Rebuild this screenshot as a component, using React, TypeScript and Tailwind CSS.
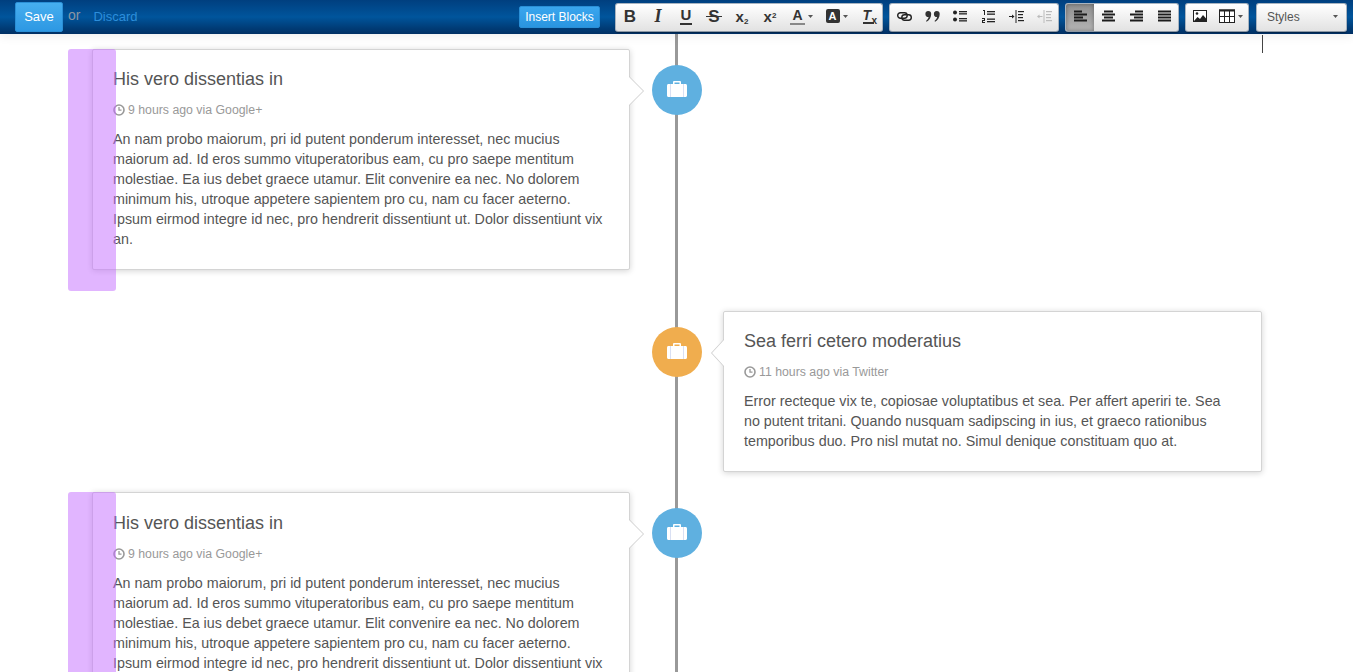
import React from 'react';

const Caret = () => (
  <svg width="5" height="3" viewBox="0 0 5 3" className="ml-[3px] fill-[#555]">
    <path d="M0 0h5L2.5 3z" />
  </svg>
);

const ToolButton = ({ children, width = 'w-[28px]', active }: { children: React.ReactNode; width?: string; active?: boolean }) => (
  <div
    className={`flex h-full items-center justify-center pb-[2px] ${width} ${
      active ? 'bg-gradient-to-b from-[#8f8f8f] to-[#b5b5b5] shadow-[inset_0_0_4px_rgba(0,0,0,0.35)]' : ''
    }`}
  >
    {children}
  </div>
);

const ToolGroup = ({ children }: { children: React.ReactNode }) => (
  <div className="flex h-[29px] overflow-hidden rounded-[3px] border border-[#a9b4c0] border-b-[#8d98a5] bg-gradient-to-b from-white to-[#e2e2e2] shadow-[0_1px_1px_rgba(0,0,0,0.3)]">
    {children}
  </div>
);

const Glyph = ({ children, className }: { children: React.ReactNode; className?: string }) => (
  <span className={`font-bold leading-none text-[#333] ${className ?? ''}`}>{children}</span>
);

const Lines = ({ rows }: { rows: [number, number][] }) => (
  <svg width="13" height="12" viewBox="0 0 13 12" className="fill-[#1c1c1c]">
    {rows.map(([x, w], i) => (
      <rect key={i} x={x} y={i * 3 + 0.5} width={w} height="2" />
    ))}
  </svg>
);

const Toolbar = () => (
  <div className="ml-[15px] flex items-center gap-[6px]">
    <ToolGroup>
      <ToolButton><Glyph className="text-[17px]">B</Glyph></ToolButton>
      <ToolButton><Glyph className="font-['Liberation_Serif',serif] text-[18px] italic">I</Glyph></ToolButton>
      <ToolButton>
        <span className="flex flex-col items-center">
          <Glyph className="text-[15px]">U</Glyph>
          <span className="mt-[1px] h-[2px] w-[12px] bg-[#333]" />
        </span>
      </ToolButton>
      <ToolButton>
        <span className="relative flex items-center justify-center">
          <Glyph className="text-[17px]">S</Glyph>
          <span className="absolute left-[-2px] right-[-2px] top-[8px] h-[1.5px] bg-[#333]" />
        </span>
      </ToolButton>
      <ToolButton><Glyph className="text-[15px]">x<sub className="text-[8px]">2</sub></Glyph></ToolButton>
      <ToolButton><Glyph className="text-[15px]">x<sup className="text-[8px]">2</sup></Glyph></ToolButton>
      <ToolButton width="w-[35px]">
        <span className="flex flex-col items-center">
          <Glyph className="text-[14px]">A</Glyph>
          <span className="mt-[1px] h-[2px] w-[15px] bg-[#888]" />
        </span>
        <Caret />
      </ToolButton>
      <ToolButton width="w-[35px]">
        <span className="flex h-[14px] w-[14px] items-center justify-center rounded-[2px] bg-[#333]">
          <span className="text-[11px] font-bold text-white">A</span>
        </span>
        <Caret />
      </ToolButton>
      <ToolButton>
        <span className="relative flex flex-col items-start">
          <Glyph className="text-[14px] italic">T</Glyph>
          <span className="h-[1.5px] w-[11px] bg-[#333]" />
          <Glyph className="absolute left-[9px] top-[8px] text-[10px]">x</Glyph>
        </span>
      </ToolButton>
    </ToolGroup>
    <ToolGroup>
      <ToolButton>
        <svg width="15" height="9" viewBox="0 0 15 9" fill="none" stroke="#222" strokeWidth="1.4">
          <rect x="0.700" y="0.700" width="9.500" height="5.500" rx="2.750" />
          <rect x="4.800" y="2.800" width="9.500" height="5.500" rx="2.750" />
        </svg>
      </ToolButton>
      <ToolButton>
        <svg width="15" height="11" viewBox="0 0 15 11" className="fill-[#333]">
          <path d="M3.2 0a3 3 0 0 1 3 3c0 3.6-2 6.5-4.6 7.8l-.6-.9C2.500 8.800 3.400 7.500 3.600 6A3 3 0 1 1 3.200 0z" />
          <path d="M11.700 0a3 3 0 0 1 3 3c0 3.600-2 6.500-4.600 7.800l-.6-.9c1.500-1.100 2.400-2.400 2.600-3.900a3 3 0 1 1-.4-6z" />
        </svg>
      </ToolButton>
      <ToolButton>
        <svg width="14" height="12" viewBox="0 0 14 12" className="fill-[#222]">
          <circle cx="2" cy="2.500" r="2" />
          <circle cx="2" cy="9.500" r="2" />
          <rect x="6" y="1" width="8" height="1.300" />
          <rect x="6" y="3.200" width="8" height="1.300" />
          <rect x="6" y="8" width="8" height="1.300" />
          <rect x="6" y="10.200" width="8" height="1.300" />
        </svg>
      </ToolButton>
      <ToolButton>
        <svg width="13" height="13" viewBox="0 0 13 13" className="fill-[#222]">
          <path d="M1 0h2v5H2V1H1zM0 8h3v3H1v1h2v1H0v-3h2V9H0z" />
          <rect x="5" y="1" width="8" height="1.300" />
          <rect x="5" y="3.500" width="8" height="1.300" />
          <rect x="5" y="8.500" width="8" height="1.300" />
          <rect x="5" y="11" width="8" height="1.300" />
        </svg>
      </ToolButton>
      <ToolButton>
        <svg width="15" height="13" viewBox="0 0 15 13" className="fill-[#222]">
          <path d="M0 6h3V4.500L5.500 6.500 3 8.500V7H0z" />
          <rect x="6.500" y="0" width="1" height="13" />
          <rect x="9" y="1" width="6" height="1.200" />
          <rect x="9" y="4" width="5" height="1.200" />
          <rect x="9" y="7" width="5" height="1.200" />
          <rect x="9" y="10" width="6" height="1.200" />
        </svg>
      </ToolButton>
      <ToolButton>
        <svg width="15" height="13" viewBox="0 0 15 13" className="fill-[#bbb]">
          <path d="M5.500 6H2.500V4.500L0 6.500 2.500 8.500V7h3z" />
          <rect x="6.500" y="0" width="1" height="13" />
          <rect x="9" y="1" width="6" height="1.200" />
          <rect x="9" y="4" width="5" height="1.200" />
          <rect x="9" y="7" width="5" height="1.200" />
          <rect x="9" y="10" width="6" height="1.200" />
        </svg>
      </ToolButton>
    </ToolGroup>
    <ToolGroup>
      <ToolButton active><Lines rows={[[0, 8], [0, 13], [0, 9], [0, 13]]} /></ToolButton>
      <ToolButton><Lines rows={[[2, 9], [0, 13], [2, 9], [0, 13]]} /></ToolButton>
      <ToolButton><Lines rows={[[5, 8], [0, 13], [4, 9], [0, 13]]} /></ToolButton>
      <ToolButton><Lines rows={[[0, 13], [0, 13], [0, 13], [0, 13]]} /></ToolButton>
    </ToolGroup>
    <ToolGroup>
      <ToolButton>
        <svg width="14" height="12" viewBox="0 0 14 12">
          <rect x="0.500" y="0.500" width="13" height="11" fill="#fff" stroke="#222" />
          <path d="M1 11l3.500-4 2.500 2 3-4 3.500 4v2z" fill="#222" />
          <circle cx="4" cy="3.500" r="1.300" fill="#222" />
        </svg>
      </ToolButton>
      <ToolButton width="w-[34px]">
        <svg width="16" height="14" viewBox="0 0 16 14" fill="#fff" stroke="#222">
          <rect x="0.500" y="1" width="15" height="12.500" />
          <path d="M0 1.500h16" strokeWidth="2" />
          <path d="M5.500 2v11M10.500 2v11M1 7.500h14" />
        </svg>
        <Caret />
      </ToolButton>
    </ToolGroup>
    <div className="ml-[1px] flex h-[29px] w-[91px] items-center justify-between rounded-[3px] border border-[#a9b4c0] border-b-[#8d98a5] bg-gradient-to-b from-white to-[#e2e2e2] pb-[1px] pl-[10px] pr-[8px] shadow-[0_1px_1px_rgba(0,0,0,0.3)]">
      <span className="text-[12px] text-[#555]">Styles</span>
      <Caret />
    </div>
  </div>
);

const Header = () => (
  <header className="relative z-10 flex h-[34px] shrink-0 items-center bg-gradient-to-b from-[#003f7f] via-[#00559c] via-50% to-[#002f63] pr-[6px] shadow-[0_2px_10px_rgba(0,0,0,0.08)]">
    <button className="ml-[15px] h-[30px] w-[48px] rounded-[2px] border border-[#2a8fd6] bg-gradient-to-b from-[#46aeef] to-[#2d98e3] text-[13px] text-white">
      Save
    </button>
    <span className="ml-[5px] -translate-y-[2px] text-[14px] text-[#8a96a3]">or</span>
    <a className="ml-[13px] text-[13px] text-[#2c8edb]">Discard</a>
    <button className="ml-auto h-[22px] w-[81px] rounded-[2px] border border-[#2a8fd6] bg-gradient-to-b from-[#3aa6ee] to-[#2a95e0] text-[12px] text-white">
      Insert Blocks
    </button>
    <Toolbar />
  </header>
);

const Briefcase = () => (
  <svg width="20" height="17" viewBox="0 0 20 17" className="-translate-y-px">
    <path d="M6 3.500V1.200C6 .5 6.500 0 7.200 0h5.600c.7 0 1.200.5 1.200 1.200v2.300h-1.500V1.500h-5v2z" fill="#fff" />
    <path d="M1.500 3h17c.9 0 1.500.6 1.500 1.500v10c0 .9-.6 1.500-1.500 1.500h-17C.6 16 0 15.400 0 14.500v-10C0 3.600.6 3 1.500 3z" fill="#fff" />
    <path d="M3.500 3v13M16.500 3v13" stroke="#cfd8f0" strokeWidth="0.800" />
  </svg>
);

const Clock = () => (
  <svg width="12" height="12" viewBox="0 0 12 12" fill="none" stroke="#999" className="mr-[3px] shrink-0">
    <circle cx="6" cy="6" r="5" strokeWidth="1.600" />
    <path d="M6 3v3.200h2.500" strokeWidth="1.300" />
  </svg>
);

type EntryProps = {
  title: string;
  time: string;
  body: string;
  side: 'left' | 'right';
  color: string;
  marked?: boolean;
  nudge?: boolean;
};

const Entry = ({ title, time, body, side, color, marked, nudge }: EntryProps) => {
  const badge = (
    <div className={`mt-4 flex h-[50px] w-[50px] items-center justify-center rounded-full ${color}`}>
      <Briefcase />
    </div>
  );
  const panel = (
    <div
      className={`relative rounded-[2px] border border-[#d4d4d4] bg-white p-5 shadow-[0_1px_6px_rgba(0,0,0,0.175)] ${
        side === 'left' ? 'mr-[22px]' : 'ml-[21px]'
      } ${nudge ? 'pt-[21px]' : ''}`}
    >
      {side === 'left' ? (
        <>
          <div className="absolute -right-[15px] top-[26px] border-y-[15px] border-l-[15px] border-y-transparent border-l-[#ccc]" />
          <div className="absolute -right-[14px] top-[27px] border-y-[14px] border-l-[14px] border-y-transparent border-l-white" />
        </>
      ) : (
        <>
          <div className="absolute -left-[13px] top-[27px] border-y-[14px] border-r-[13px] border-y-transparent border-r-[#ccc]" />
          <div className="absolute -left-[12px] top-[28px] border-y-[13px] border-r-[12px] border-y-transparent border-r-white" />
        </>
      )}
      <h4 className="-mt-px text-[18px] leading-[20px] text-[#555]">{title}</h4>
      <p className="mt-[11px] flex h-5 items-center text-[12.3px] text-[#999]">
        <Clock />
        {time}
      </p>
      <p className="mt-[9px] whitespace-pre-line text-[14.3px] leading-5 text-[#555]">{body}</p>
      {marked && (
        <div className="absolute -left-[25px] -top-[1px] h-[242px] w-[48px] rounded-[3px] bg-[#c46bff]/50" />
      )}
    </div>
  );
  return (
    <div className="grid grid-cols-[560px_50px_560px] items-start">
      {side === 'left' ? panel : <div />}
      {badge}
      {side === 'right' ? panel : <div />}
    </div>
  );
};

const lorem =
  'An nam probo maiorum, pri id putent ponderum interesset, nec mucius maiorum ad. Id eros summo vituperatoribus eam, cu pro saepe mentitum molestiae. Ea ius debet graece utamur. Elit convenire ea nec. No dolorem minimum his, utroque appetere sapientem pro cu, nam cu facer aeterno. Ipsum eirmod integre id nec, pro hendrerit dissentiunt ut. Dolor dissentiunt vix an.';

export default function App() {
  return (
    <div className="flex h-screen flex-col overflow-hidden bg-white font-['Liberation_Sans',Arial,sans-serif]">
      <Header />
      <main className="relative flex-1 pl-[92px]">
        <div className="absolute bottom-0 left-[675px] top-0 w-[3px] bg-[#999]" />
        <div className="absolute left-[1262px] top-[1px] h-[18px] w-px bg-[#444]" />
        <div className="relative flex flex-col pt-[15px]">
          <Entry
            side="left"
            color="bg-[#5fb0e0]"
            marked
            title="His vero dissentias in"
            time="9 hours ago via Google+"
            body={lorem}
          />
          <div className="mt-[41px]">
            <Entry
              side="right"
              color="bg-[#f0ad4e]"
              title="Sea ferri cetero moderatius"
              time="11 hours ago via Twitter"
              body={'Error recteque vix te, copiosae voluptatibus et sea. Per affert aperiri te. Sea\nno putent tritani. Quando nusquam sadipscing in ius, et graeco rationibus temporibus duo. Pro nisl mutat no. Simul denique constituam quo at.'}
            />
          </div>
          <div className="mt-5">
            <Entry
              side="left"
              color="bg-[#5fb0e0]"
              marked
              nudge
              title="His vero dissentias in"
              time="9 hours ago via Google+"
              body={lorem}
            />
          </div>
        </div>
      </main>
    </div>
  );
}
